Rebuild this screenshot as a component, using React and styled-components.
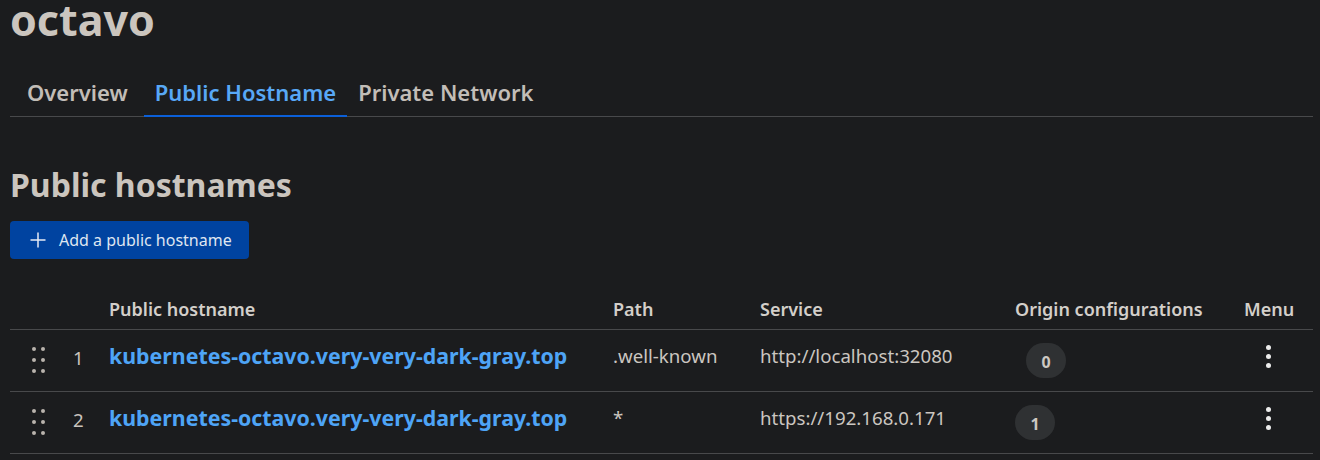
import React from "react";
import styled, { createGlobalStyle } from "styled-components";

const GlobalStyle = createGlobalStyle`
  body {
    margin: 0;
    background: #1b1c1e;
    font-family: "Noto Sans", "Open Sans", sans-serif;
    color: #cbc6c0;
  }
`;

const Page = styled.main`
  padding: 0 7px 0 10px;
  height: 460px;
  overflow: hidden;
`;

const Title = styled.h1`
  margin: 0;
  font-size: 43px;
  line-height: 40px;
  font-weight: 700;
  color: #cbc5be;
`;

const TabBar = styled.nav`
  display: flex;
  margin-top: 38px;
  padding-left: 6px;
  border-bottom: 1px solid #48494b;
`;

const Tab = styled.div`
  padding: 0 11px 9px;
  margin-bottom: -1px;
  font-size: 22px;
  line-height: 28px;
  font-weight: 600;
  color: ${(p) => (p.active ? "#58a8f6" : "#c2bdb7")};
  border-bottom: 2px solid ${(p) => (p.active ? "#0b5fd8" : "transparent")};
  margin-right: ${(p) => p.gap || 0}px;
`;

const Heading = styled.h2`
  margin: 48px 0 0;
  font-size: 32px;
  line-height: 40px;
  font-weight: 700;
  color: #cbc5be;
`;

const AddButton = styled.button`
  display: flex;
  align-items: center;
  gap: 13px;
  margin-top: 16px;
  height: 38px;
  padding: 0 17px 0 20px;
  border: none;
  border-radius: 4px;
  background: #0043a0;
  color: #dfe6f1;
  font-family: inherit;
  font-size: 16px;
`;

const Table = styled.div`
  margin-top: 38px;
`;

const columns = "53px 46px 504px 147px 255px 229px 69px";

const HeadRow = styled.div`
  display: grid;
  grid-template-columns: ${columns};
  border-bottom: 1px solid #48494b;
  padding-bottom: 8px;
`;

const HeadCell = styled.div`
  font-size: 18px;
  line-height: 24px;
  font-weight: 600;
  color: #d3cfca;
  white-space: nowrap;
`;

const Row = styled.div`
  display: grid;
  grid-template-columns: ${columns};
  align-items: center;
  height: 61px;
  border-bottom: 1px solid #48494b;
`;

const Handle = styled.div`
  display: grid;
  grid-template-columns: 4px 4px;
  column-gap: 5px;
  row-gap: 7px;
  padding-left: 22px;
  margin-top: -2px;

  span {
    width: 4px;
    height: 4px;
    border-radius: 50%;
    background: #b9b3ad;
  }
`;

const Num = styled.div`
  padding-left: 10px;
  font-size: 18.67px;
  color: #c9c3bd;
  margin-top: -6px;
`;

const Host = styled.a`
  font-size: 21.33px;
  font-weight: 700;
  color: #4ea4f6;
  text-decoration: none;
  margin-top: -10px;
  white-space: nowrap;
`;

const Text = styled.div`
  font-size: 18.67px;
  color: #cbc6c0;
  margin-top: -10px;
  white-space: nowrap;
`;

const Badge = styled.div`
  width: 40px;
  height: 35px;
  margin-left: ${(p) => p.offset || 0}px;
  border-radius: 18px;
  background: #2f3133;
  display: flex;
  align-items: center;
  justify-content: center;
  padding-top: 2px;
  box-sizing: border-box;
  font-size: 16px;
  font-weight: 700;
  color: #cdc8c2;
`;

const Kebab = styled.div`
  display: flex;
  flex-direction: column;
  gap: 4px;
  padding-left: 22px;
  margin-top: -8px;

  span {
    width: 5px;
    height: 5px;
    border-radius: 50%;
    background: #ececec;
  }
`;

const PlusIcon = () => (
  <svg width="16" height="16" viewBox="0 0 16 16">
    <path d="M8 0.5v15M0.5 8h15" stroke="#e6ecf5" strokeWidth="1.5" fill="none" />
  </svg>
);

const rows = [
  { n: 1, path: ".well-known", service: "http://localhost:32080", origin: 0, offset: 11 },
  { n: 2, path: "*", service: "https://192.168.0.171", origin: 1, offset: 0 },
];

export default function App() {
  return (
    <Page>
      <GlobalStyle />
      <Title>octavo</Title>
      <TabBar>
        <Tab gap={5}>Overview</Tab>
        <Tab active>Public Hostname</Tab>
        <Tab>Private Network</Tab>
      </TabBar>
      <Heading>Public hostnames</Heading>
      <AddButton>
        <PlusIcon />
        Add a public hostname
      </AddButton>
      <Table>
        <HeadRow>
          <HeadCell />
          <HeadCell />
          <HeadCell>Public hostname</HeadCell>
          <HeadCell>Path</HeadCell>
          <HeadCell>Service</HeadCell>
          <HeadCell>Origin configurations</HeadCell>
          <HeadCell>Menu</HeadCell>
        </HeadRow>
        {rows.map((r) => (
          <Row key={r.n}>
            <Handle>
              {[0, 1, 2, 3, 4, 5].map((i) => (
                <span key={i} />
              ))}
            </Handle>
            <Num>{r.n}</Num>
            <Host href="#">kubernetes-octavo.very-very-dark-gray.top</Host>
            <Text>{r.path}</Text>
            <Text>{r.service}</Text>
            <Badge offset={r.offset}>{r.origin}</Badge>
            <Kebab>
              <span />
              <span />
              <span />
            </Kebab>
          </Row>
        ))}
      </Table>
    </Page>
  );
}
